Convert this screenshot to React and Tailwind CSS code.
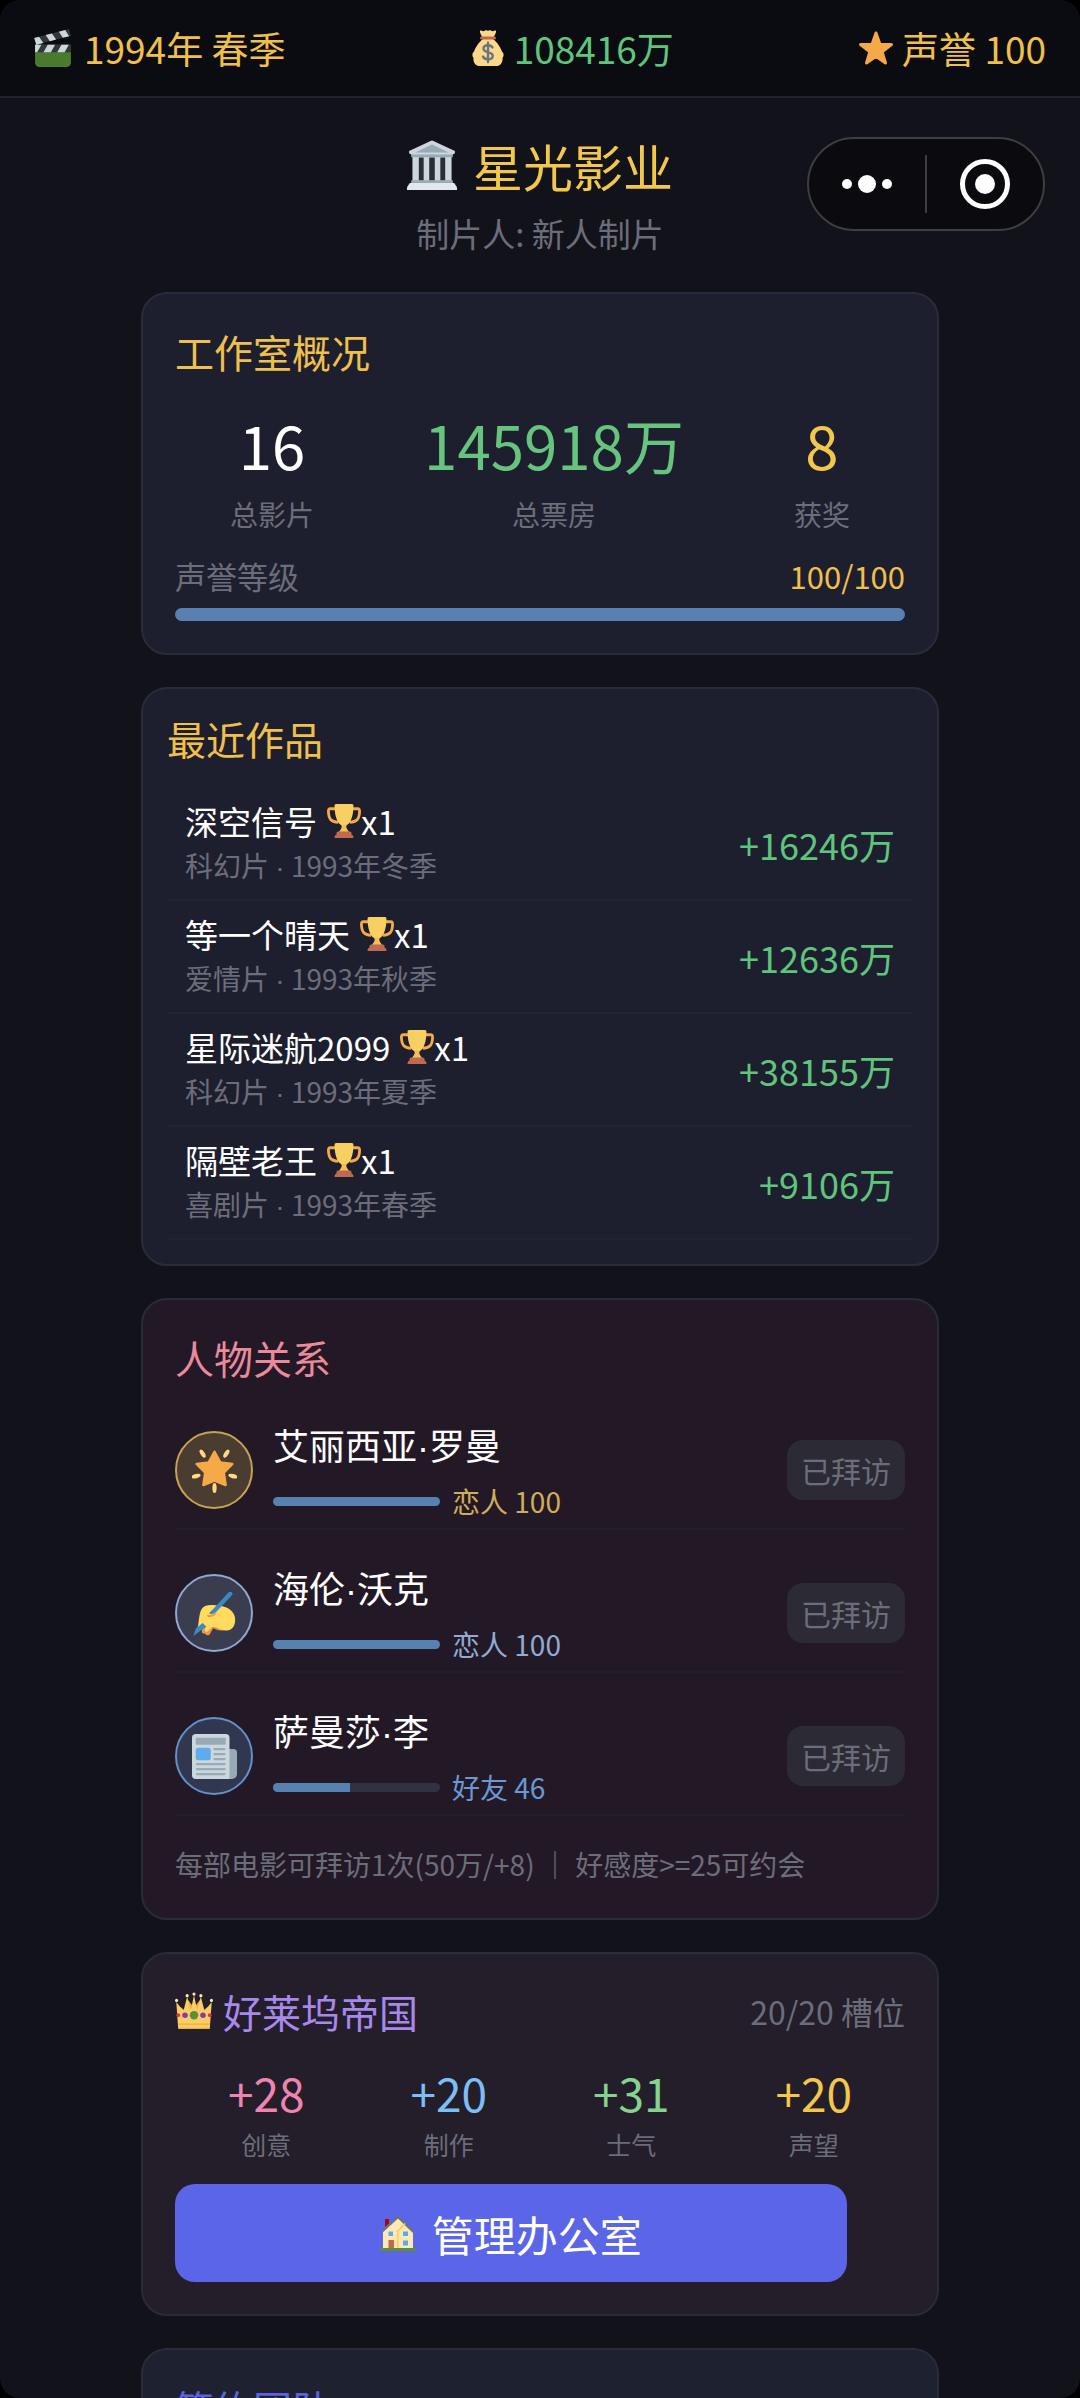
import clsx from "clsx";

const movies = [
  { title: "深空信号", genre: "科幻片", date: "1993年冬季", awards: 1, income: 16246 },
  { title: "等一个晴天", genre: "爱情片", date: "1993年秋季", awards: 1, income: 12636 },
  { title: "星际迷航2099", genre: "科幻片", date: "1993年夏季", awards: 1, income: 38155 },
  { title: "隔壁老王", genre: "喜剧片", date: "1993年春季", awards: 1, income: 9106 },
];

const people = [
  {
    first: "艾丽西亚",
    last: "罗曼",
    level: "恋人",
    value: 100,
    icon: GlowingStar,
    avatar: "bg-[#4a3c31] border-[#c5a351]",
    text: "text-[#d0ad5b]",
  },
  {
    first: "海伦",
    last: "沃克",
    level: "恋人",
    value: 100,
    icon: WritingHand,
    avatar: "bg-[#3a3c4f] border-[#8ea8d2]",
    text: "text-[#92abd3]",
  },
  {
    first: "萨曼莎",
    last: "李",
    level: "好友",
    value: 46,
    icon: Newspaper,
    avatar: "bg-[#30374f] border-[#6390cb]",
    text: "text-[#6c98d2]",
  },
];

const bonuses = [
  { label: "创意", value: 28, color: "text-[#ee85b0]" },
  { label: "制作", value: 20, color: "text-[#7cbff5]" },
  { label: "士气", value: 31, color: "text-[#84d48e]" },
  { label: "声望", value: 20, color: "text-[#f3c64c]" },
];

function Clapper({ className }) {
  return (
    <svg viewBox="0 0 36 36" className={className} aria-hidden="true">
      <path fill="#4a7a2c" d="M35 32a4 4 0 0 1-4 4H5a4 4 0 0 1-4-4V15h34z" />
      <path fill="#31373D" d="M1 15h34v7H1zM.2 8.600 33 0l2 6.300L2.200 15z" />
      <path fill="#CCD6DD" d="M1 15h6l-4 7H1zM13 15h7l-4 7H9zM26 15h7l-4 7h-7zM.2 8.600l4.600-1.200 4 5.800L2.200 15zM11 5.800l6-1.600 4 5.800-6 1.600zM23.500 2.500l6-1.600 3.800 6-5.900 1.500z" />
    </svg>
  );
}

function MoneyBag({ className }) {
  return (
    <svg viewBox="0 0 36 36" className={className} aria-hidden="true">
      <path fill="#FDD888" d="M31.900 21.500C30 15.500 25 10 22 8.500h-8C11 10 6 15.500 4.100 21.500 2 23 1.800 26 3.500 28c-.5 4 2 8 5.500 8h18c3.500 0 6-4 5.500-8 1.700-2 1.500-5-.6-6.500z" />
      <path fill="#FDD888" d="M12 7c-.5-2-2.500-4.500-2-6 .7-1.200 2.300.6 3.500.2C14.800.8 15.200-.2 16.300.3c1 .5 2.300.5 3.300 0 1.100-.5 1.500.5 2.800.9 1.200.4 2.900-1.400 3.600-.2.500 1.500-1.500 4-2 6z" />
      <path fill="#BF6952" d="M11.500 6.500h13a1.500 1.500 0 0 1 0 3h-13a1.500 1.500 0 0 1 0-3z" />
      <path fill="none" stroke="#67757F" strokeWidth="2.400" strokeLinecap="round" d="M22.500 17.500c-.8-1.700-2.500-2.300-4.500-2.300-2.600 0-4.500 1.200-4.500 3.400 0 5 9.300 2.400 9.300 7.200 0 2.200-2 3.500-4.800 3.500-2.300 0-4.200-.8-5-2.800M18 12.700V32" />
    </svg>
  );
}

function Star({ className }) {
  return (
    <svg viewBox="0 0 36 36" className={className} aria-hidden="true">
      <path fill="#f5a947" stroke="#f5a947" strokeWidth="3" strokeLinejoin="round" d="m18 3 4 11.500h11.500l-9.400 7.200L27.500 33 18 26.300 8.500 33l3.400-11.300-9.400-7.200H14z" />
    </svg>
  );
}

function Temple({ className }) {
  return (
    <svg viewBox="0 0 36 36" className={className} aria-hidden="true">
      <path fill="#66757F" d="M4 11h28v20H4z" />
      <path fill="#292F33" d="M6 13h24v16H6z" />
      <path fill="#CCD6DD" d="M4 11h4.500v20H4zM12 11h4v20h-4zM20 11h4v20h-4zM27.500 11H32v20h-4.500z" />
      <path fill="#9AAAB4" d="M3 10h30v2.500H3zM3 29h30v3H3z" />
      <path fill="#CCD6DD" d="M1.500 9.500V8L17 .7a2 2 0 0 1 2 0L34.500 8v1.500L33 10.500H3z" />
      <path fill="#9AAAB4" d="M18 3.300 30 9H6z" />
      <path fill="#E1E8ED" d="M2 31h32l2 3v2H0v-2z" />
    </svg>
  );
}

function Trophy({ className }) {
  return (
    <svg viewBox="0 0 36 36" className={className} aria-hidden="true">
      <path fill="none" stroke="#f5a947" strokeWidth="3" d="M10 5H3.500c-2 0-2 1-2 3 .3 8 2.500 10.500 10.500 11.500M26 5h6.500c2 0 2 1 2 3-.3 8-2.500 10.500-10.500 11.500" />
      <path fill="#f8cf62" d="M8 1.500C8 .6 9 0 10 0h16c1 0 2 .6 2 1.500 0 10-2.500 18-6.500 20.500-1.500 1-1.500 3 0 5 1 1.400 2 2.500 2 4h-11c0-1.500 1-2.600 2-4 1.500-2 1.500-4 0-5C10.500 19.500 8 11.500 8 1.500z" />
      <path fill="#f5a947" d="M15.500 22h5c-1 1.500-1 2.500 0 5l3 4h-11l3-4c1-2.500 1-3.500 0-5z" opacity=".45" />
      <path fill="#C1694F" d="M10 31c0-1.100.9-2 2-2h12a2 2 0 0 1 2 2v1.500c1.500.3 2 1.300 2 3.500H8c0-2.200.5-3.200 2-3.500z" />
    </svg>
  );
}

function GlowingStar({ className }) {
  return (
    <svg viewBox="0 0 36 36" className={className} aria-hidden="true">
      <path fill="#f5a947" stroke="#f5a947" strokeWidth="2" strokeLinejoin="round" d="m18 3 4.600 8.500 9.700 1.200-6.900 6.900 1.500 10L18 26l-8.900 3.600 1.500-10-6.900-6.900 9.700-1.200z" />
      <g fill="#FFD983">
        <ellipse cx="8.500" cy="4.500" rx="1.700" ry="3.700" transform="rotate(-32 8.500 4.500)" />
        <ellipse cx="27.500" cy="4.500" rx="1.700" ry="3.700" transform="rotate(32 27.500 4.500)" />
        <ellipse cx="3.300" cy="22.500" rx="1.700" ry="3.700" transform="rotate(75 3.300 22.500)" />
        <ellipse cx="32.700" cy="22.500" rx="1.700" ry="3.700" transform="rotate(-75 32.700 22.500)" />
        <ellipse cx="18" cy="32" rx="1.700" ry="4" />
      </g>
    </svg>
  );
}

function WritingHand({ className }) {
  return (
    <svg viewBox="0 0 36 36" className={className} aria-hidden="true">
      <path fill="#EF9645" d="M7 22c0-6 9-7 14-5l6 14c-4 1.500-9-.5-10-1.500L14 35c-3 1.500-3.500-1-3.500-1-2 .5-3-1-2.500-2z" />
      <path fill="#FFDC5D" d="M5 27C6 20 6 14 10.500 12c4-1.500 8.500-.5 11.500 0 6 0 12 4 12.500 10C35 29 31 32 27 31.500c-5-.5-7-3-10-3-2 0-4 5-6 4-1.500-1 0-4 0-4s-4 3-5.500 2S5 27 5 27z" />
      <path fill="#3B88C3" d="M29 1.300c1-1.300 4-.8 3.300 1.700L19.500 16.500c-1.500 1.500-3.500 2-5 1.800-1-.3-.5-1 1-2.300zM8.500 25.500l3 3L6.500 32 1 36l2-6z" />
      <path fill="#EF9645" d="M12 19c3 .8 6-.5 8-3-.5 3.500-4 5.500-7.500 4.500z" />
    </svg>
  );
}

function Newspaper({ className }) {
  return (
    <svg viewBox="0 0 36 36" className={className} aria-hidden="true">
      <path fill="#99AAB5" d="M26 12h7a3 3 0 0 1 3 3v17a4 4 0 0 1-4 4h-6z" />
      <path fill="#CCD6DD" d="M3 0h24a3 3 0 0 1 3 3v33H3a3 3 0 0 1-3-3V3a3 3 0 0 1 3-3z" />
      <rect x="3" y="3" width="24" height="5.500" rx="1" fill="#99AAB5" />
      <rect x="3" y="11" width="12" height="10" rx="2" fill="#5DADEC" />
      <path stroke="#99AAB5" strokeWidth="1.800" strokeLinecap="round" d="M18 12h8M18 16h8M18 20h8M4 24h22M4 28h22M4 32h22" />
    </svg>
  );
}

function Crown({ className }) {
  return (
    <svg viewBox="0 0 36 36" className={className} aria-hidden="true">
      <path fill="#f5a947" d="M5 30V14l7 6 0-13 6 8 6-8 0 13 7-6v16z" />
      <path fill="#f8cf62" d="M3 34 1.200 9.500 8 18l3.500-13.500L15 17l3-14 3 14 3.500-12.500L28 18l6.800-8.500L33 34z" />
      <g fill="#FFE8B6">
        <circle cx="1.500" cy="8" r="1.500" />
        <circle cx="34.500" cy="8" r="1.500" />
        <circle cx="11.500" cy="3.500" r="1.500" />
        <circle cx="24.500" cy="3.500" r="1.500" />
        <circle cx="18" cy="2" r="1.500" />
      </g>
      <path stroke="#f5a947" strokeWidth="1.200" d="M3 30.500h30M3 34.500h30" />
      <circle cx="18" cy="22" r="4" fill="#5C913B" />
      <circle cx="9.500" cy="22" r="2.600" fill="#9232b4" />
      <circle cx="26.500" cy="22" r="2.600" fill="#9232b4" />
      <circle cx="3" cy="22" r="1.800" fill="#DD2E44" />
      <circle cx="33" cy="22" r="1.800" fill="#DD2E44" />
    </svg>
  );
}

function House({ className }) {
  return (
    <svg viewBox="0 0 36 36" className={className} aria-hidden="true">
      <path fill="#A0041E" d="M5 4h4v12H5z" />
      <path fill="#FFE8B6" d="M3 15 18 2l15 14v18H3z" />
      <path fill="#FFCC4D" d="M17 17h1.500v17H17z" />
      <path fill="none" stroke="#66757F" strokeWidth="2.400" strokeLinejoin="round" d="M2.500 16 18 1.800 33.500 17" />
      <path fill="none" stroke="#FFCC4D" strokeWidth="1.500" d="m17 17 8-8.500" />
      <path fill="#C1694F" d="M8.500 25h5.500v9H8.500z" />
      <path fill="#55ACEE" d="M8.500 16.500h4.500v4.500H8.500zM23 16.500h5V21h-5zM23 25.500h5v5h-5z" />
      <path fill="#5C913B" d="M1 33h34a1 1 0 0 1 1 1v2H0v-2a1 1 0 0 1 1-1z" />
    </svg>
  );
}

// CJK fonts draw the middle dot full width, so take a narrow one
function Dot() {
  return <span className="font-['Liberation_Sans',sans-serif]">·</span>;
}

function Card({ className, children }) {
  return (
    <section className={clsx("border-2 border-[#2a2b38] rounded-[26px]", className)}>
      {children}
    </section>
  );
}

function CardTitle({ className, children }) {
  return <h2 className={clsx("text-[39px] leading-[50px]", className)}>{children}</h2>;
}

function ProgressBar({ value, label, className }) {
  return (
    <div
      role="progressbar"
      aria-label={label}
      aria-valuenow={value}
      aria-valuemin={0}
      aria-valuemax={100}
      className={clsx("bg-[#303242] rounded-full overflow-hidden", className)}
    >
      <div className="h-full bg-[#5781b1]" style={{ width: `${value}%` }} />
    </div>
  );
}

function Stat({ value, label, color }) {
  return (
    <div className="text-center">
      <p className={clsx("text-[60px] leading-[80px]", color)}>{value}</p>
      <p className="mt-[10px] text-[28px] leading-[40px] text-[#6c6d7a]">{label}</p>
    </div>
  );
}

function StatusBar() {
  return (
    <header className="flex items-center justify-between px-[34px] h-[98px] text-[37px] leading-[50px] bg-[#0b0c12] border-b-2 border-[#22232d] text-[#f0c04c]">
      <div className="flex items-center gap-3">
        <Clapper className="w-[38px] h-[38px]" />
        <span>1994年 春季</span>
      </div>
      <div className="flex items-center gap-2 text-[#5fc57d]">
        <MoneyBag className="w-[36px] h-[36px]" />
        <span>108416万</span>
      </div>
      <div className="flex items-center gap-2">
        <Star className="w-[36px] h-[36px]" />
        <span>声誉 100</span>
      </div>
    </header>
  );
}

function Capsule() {
  return (
    <div className="absolute right-[35px] top-[137px] flex items-center w-[238px] h-[94px] rounded-full border-2 border-[#3d3d42] bg-[#0b0b0f]">
      <button aria-label="更多" className="flex-1 flex items-center justify-center gap-[6px]">
        <span className="w-[10px] h-[10px] rounded-full bg-white" />
        <span className="w-[18px] h-[18px] rounded-full bg-white" />
        <span className="w-[10px] h-[10px] rounded-full bg-white" />
      </button>
      <span className="w-[2px] h-[58px] bg-[#3d3d42]" />
      <button aria-label="关闭" className="flex-1 flex items-center justify-center">
        <span className="flex items-center justify-center w-[50px] h-[50px] rounded-full border-[5px] border-white">
          <span className="w-[20px] h-[20px] rounded-full bg-white" />
        </span>
      </button>
    </div>
  );
}

function Overview() {
  return (
    <Card className="p-8 bg-[#1e1f2e]">
      <CardTitle className="text-[#f0c04c]">工作室概况</CardTitle>
      <div className="flex justify-around mt-7">
        <Stat value="16" label="总影片" color="text-white" />
        <Stat value="145918万" label="总票房" color="text-[#66c47e]" />
        <Stat value="8" label="获奖" color="text-[#f3c64c]" />
      </div>
      <div className="flex justify-between mt-5 text-[31px] leading-[44px]">
        <span className="text-[#6c6d7a]">声誉等级</span>
        <span className="text-[#f0c04c]">100/100</span>
      </div>
      <ProgressBar value={100} label="声誉等级" className="mt-[10px] h-[13px]" />
    </Card>
  );
}

function RecentMovies() {
  return (
    <Card className="p-6 bg-[#1e1f2e]">
      <CardTitle className="text-[#f0c04c]">最近作品</CardTitle>
      <ul className="mt-[25px]">
        {movies.map((m) => (
          <li
            key={m.title}
            className="flex items-center justify-between h-[113px] px-[18px] border-b-2 border-[#232433]"
          >
            <div>
              <p className="flex items-center text-[33px] leading-[46px] text-white">
                <span>{m.title}</span>
                <Trophy className="w-[34px] h-[34px] ml-[10px]" />
                <span>x{m.awards}</span>
              </p>
              <p className="text-[28px] leading-[42px] text-[#6c6d7a]">
                {m.genre} <Dot /> {m.date}
              </p>
            </div>
            <span className="text-[36px] text-[#5fc57d]">+{m.income}万</span>
          </li>
        ))}
      </ul>
    </Card>
  );
}

function Relations() {
  return (
    <Card className="p-8 bg-[#231926]">
      <CardTitle className="text-[#ea8a9b]">人物关系</CardTitle>
      <ul className="mt-[30px] space-y-[25px]">
        {people.map((p) => {
          const Icon = p.icon;
          return (
            <li key={p.first} className="flex items-center h-[118px] border-b-2 border-[#261d2a]">
              <div
                className={clsx(
                  "flex items-center justify-center w-[78px] h-[78px] rounded-full border-2 shrink-0",
                  p.avatar
                )}
              >
                <Icon className="w-[45px] h-[45px]" />
              </div>
              <div className="flex-1 ml-5">
                <p className="text-[36px] leading-[50px] text-white">
                  {p.first}
                  <Dot />
                  {p.last}
                </p>
                <div className="flex items-center gap-3 mt-2">
                  <ProgressBar value={p.value} label={p.first} className="w-[167px] h-[9px]" />
                  <span className={clsx("text-[28px] leading-[40px]", p.text)}>
                    {p.level} {p.value}
                  </span>
                </div>
              </div>
              <button
                disabled
                className="w-[118px] h-[60px] rounded-2xl bg-[#2b2a35] text-[30px] text-[#6c6d7a]"
              >
                已拜访
              </button>
            </li>
          );
        })}
      </ul>
      <p className="mt-[26px] text-[28px] leading-[44px] text-[#6c6d7a]">
        每部电影可拜访1次(50万/+8) ｜ 好感度&gt;=25可约会
      </p>
    </Card>
  );
}

function Empire() {
  return (
    <Card className="p-8 bg-[#231e2a]">
      <div className="flex items-center justify-between">
        <div className="flex items-center gap-[10px]">
          <Crown className="w-[38px] h-[38px]" />
          <CardTitle className="text-[#a789ec]">好莱坞帝国</CardTitle>
        </div>
        <span className="text-[32px] leading-[44px] text-[#6c6d7a]">20/20 槽位</span>
      </div>
      <div className="flex justify-around mt-[26px]">
        {bonuses.map((b) => (
          <div key={b.label} className="text-center">
            <p className={clsx("text-[46px] leading-[60px]", b.color)}>+{b.value}</p>
            <p className="mt-1 text-[25px] leading-[36px] text-[#6c6d7a]">{b.label}</p>
          </div>
        ))}
      </div>
      <button className="flex items-center justify-center gap-4 mt-[22px] w-[92%] h-[98px] rounded-[20px] bg-[#5b65e8] text-[42px] text-white">
        <House className="w-[36px] h-[38px]" />
        管理办公室
      </button>
    </Card>
  );
}

export default function App() {
  return (
    <div className="h-screen bg-black font-['Noto_Sans_CJK_SC',sans-serif]">
      <div className="relative h-full overflow-hidden rounded-[20px] bg-[#11121a]">
        <StatusBar />
        <Capsule />
        <div className="pt-[35px] text-center">
          <h1 className="flex items-center justify-center gap-4 text-[50px] leading-[64px] text-[#f3c64c]">
            <Temple className="w-[50px] h-[50px]" />
            星光影业
          </h1>
          <p className="mt-[14px] text-[33px] leading-[44px] text-[#6c6d7a]">制片人: 新人制片</p>
        </div>
        <main className="flex flex-col gap-8 w-full max-w-[798px] mx-auto mt-[37px]">
          <Overview />
          <RecentMovies />
          <Relations />
          <Empire />
          <Card className="p-8 bg-[#1d2130]">
            <CardTitle className="text-[#5c62e0]">签约团队</CardTitle>
          </Card>
        </main>
      </div>
    </div>
  );
}
